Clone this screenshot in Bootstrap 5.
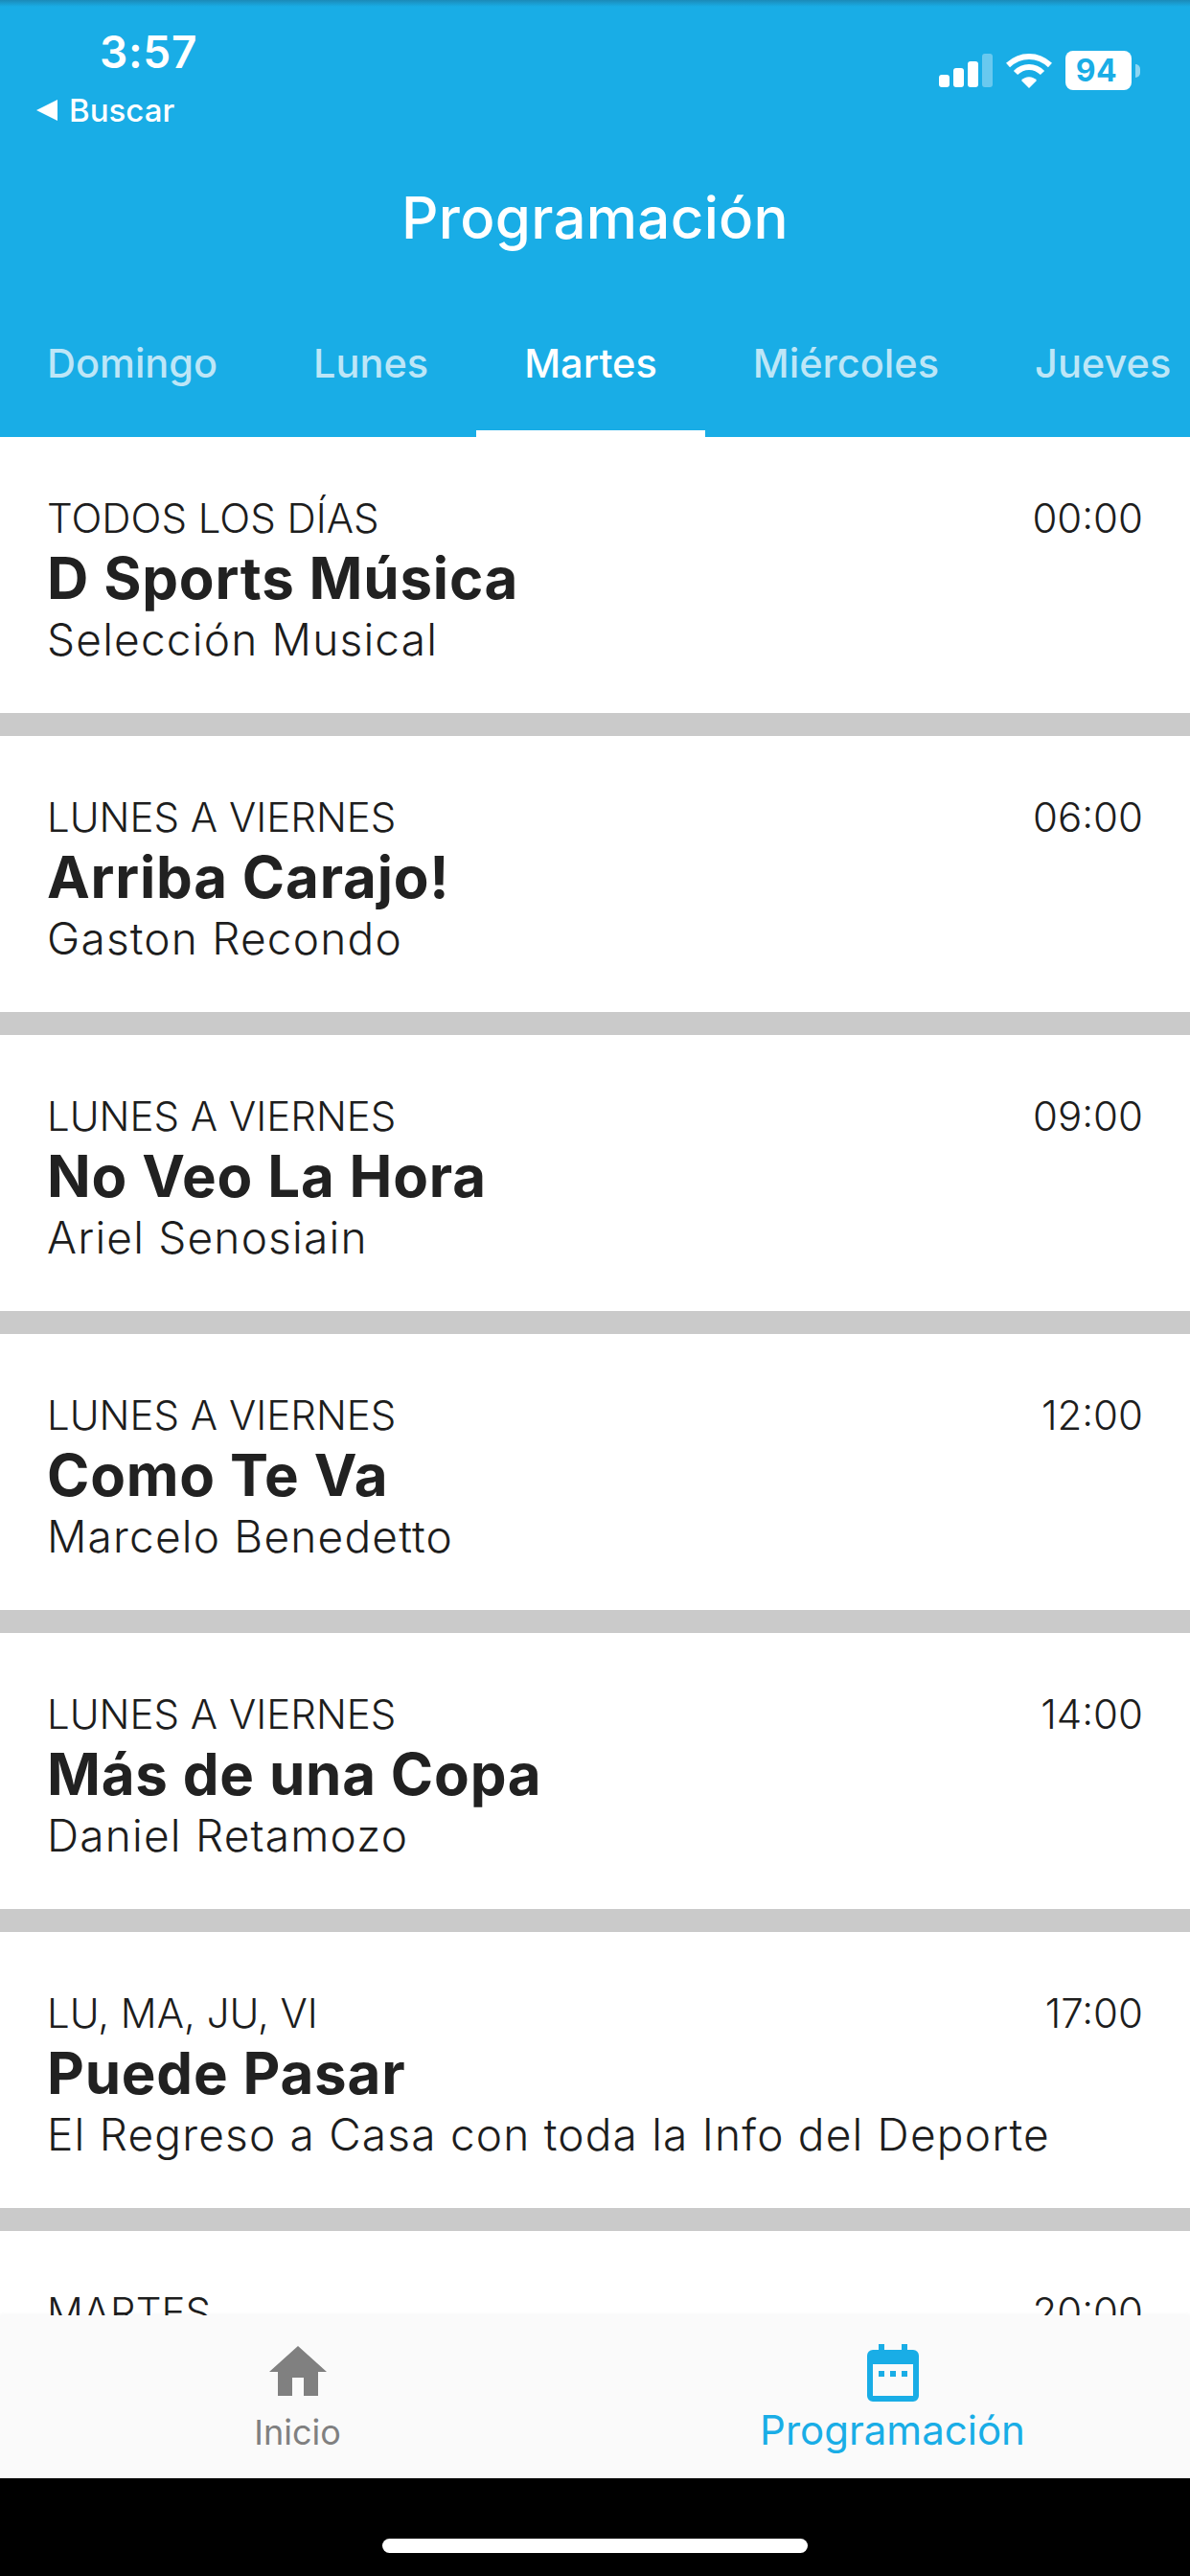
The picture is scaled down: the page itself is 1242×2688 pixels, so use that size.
<!DOCTYPE html>
<html lang="es">
<head>
<meta charset="utf-8">
<title>Programación</title>
<link href="https://cdn.jsdelivr.net/npm/bootstrap@5.3.0/dist/css/bootstrap.min.css" rel="stylesheet">
<style>
html,body{margin:0;height:2688px;overflow:hidden;background:#000}
body{font-family:Inter,"Liberation Sans",sans-serif;color:#212121}
.phone{width:1242px;height:2688px}
.hdr{background:#19ade6;height:456px;color:#fff;flex:none;background-image:linear-gradient(#1b8ab8 0,#19ade6 7px)}
.stat{height:144px;padding:0 52px 0 38px}
.clock{font-size:46px;font-weight:600;line-height:56px;padding:26px 0 0 66px;letter-spacing:.7px}
.back{font-size:33px;line-height:36px;font-weight:500;margin-top:15px;gap:12px}
.tri{width:0;height:0;border:11px solid transparent;border-right:22px solid #fff;border-left:0}
.sicons{padding-top:53px;gap:14px;height:94px}
.batt{width:69px;height:41px;background:#fff;border-radius:8px;color:#19ade6;font-size:32px;font-weight:700;line-height:41px;text-align:center;padding-right:4px;letter-spacing:.5px}
.nub{width:5px;height:14px;background:#fff;opacity:.5;border-radius:0 7px 7px 0;margin-left:-8px}
.ttl{font-size:60px;font-weight:500;line-height:68px;height:68px;margin-top:49px;letter-spacing:.3px}
.tabsrow{margin-top:70px;height:125px;overflow:hidden;flex-wrap:nowrap}
.tabsrow .nav-link{color:#bde6f7;font-size:41.5px;font-weight:500;line-height:50px;padding:23px 50px 0;height:125px;white-space:nowrap;border-bottom:7px solid transparent;border-radius:0}
.tabsrow .nav-link:first-child{padding-left:49px}
.tabsrow .nav-link.active{color:#fff;border-bottom-color:#fff}
.feed{flex:1 1 0;min-height:0;overflow:hidden;background:#cacaca}
.prog{background:#fff;height:288px;margin-bottom:24px;padding:60px 49px 0 49px}
.dlabel{font-size:42px;line-height:50px;font-weight:300;color:#1d1d1d}
.hour{font-size:42px;line-height:50px;font-weight:300;color:#1d1d1d}
.pname{font-size:60px;line-height:74px;font-weight:700;color:#212121;letter-spacing:.8px}
.psub{font-size:46px;line-height:54px;font-weight:300;color:#1d1d1d;letter-spacing:1.2px}
.tbar{height:170px;background:#fafafa;flex:none;box-shadow:0 -1px 4px rgba(0,0,0,.04)}
.tcol{flex:1 1 0;min-width:0}
.tlab{font-size:36px;line-height:42px;color:#808080;font-weight:400}
.tlab.on{font-size:42px;line-height:52px;color:#19ade6}
.homeic{margin-top:32px;display:block}
.calic{margin-top:30px;display:block}
.blackfoot{height:102px;background:#000;flex:none}
.pill{width:444px;height:15px;background:#fff;border-radius:8px;margin-top:63px}
</style>
</head>
<body>
<div class="phone d-flex flex-column">
  <header class="hdr">
    <div class="stat d-flex justify-content-between align-items-start">
      <div>
        <div class="clock">3:57</div>
        <div class="back d-flex align-items-center"><span class="tri"></span><span>Buscar</span></div>
      </div>
      <div class="sicons d-flex align-items-center">
        <svg width="56" height="36" viewBox="0 0 56 36"><rect x="0" y="22" width="11" height="13" rx="3" fill="#fff"/><rect x="15" y="15" width="11" height="20" rx="3" fill="#fff"/><rect x="30" y="8" width="11" height="27" rx="3" fill="#fff"/><rect x="45" y="0" width="11" height="35" rx="3" fill="#fff" opacity=".35"/></svg>
        <svg width="48" height="36" viewBox="0 0 48 36"><path d="M2 12C15 0 33 0 46 12" fill="none" stroke="#fff" stroke-width="6"/><path d="M10 20C18 12 30 12 38 20" fill="none" stroke="#fff" stroke-width="6"/><path d="M16 28C20 23 28 23 32 28L24 36Z" fill="#fff"/></svg>
        <div class="d-flex align-items-center">
          <div class="batt">94</div>
          <div class="nub ms-1"></div>
        </div>
      </div>
    </div>
    <div class="ttl text-center">Programación</div>
    <nav class="nav tabsrow">
      <a class="nav-link" href="#">Domingo</a>
      <a class="nav-link" href="#">Lunes</a>
      <a class="nav-link active" href="#">Martes</a>
      <a class="nav-link" href="#">Miércoles</a>
      <a class="nav-link" href="#">Jueves</a>
    </nav>
  </header>
  <main class="feed">
    <div class="prog"><div class="d-flex justify-content-between"><span class="dlabel">TODOS LOS DÍAS</span><span class="hour">00:00</span></div><div class="pname">D Sports Música</div><div class="psub">Selección Musical</div></div>
    <div class="prog"><div class="d-flex justify-content-between"><span class="dlabel">LUNES A VIERNES</span><span class="hour">06:00</span></div><div class="pname">Arriba Carajo!</div><div class="psub">Gaston Recondo</div></div>
    <div class="prog"><div class="d-flex justify-content-between"><span class="dlabel">LUNES A VIERNES</span><span class="hour">09:00</span></div><div class="pname">No Veo La Hora</div><div class="psub">Ariel Senosiain</div></div>
    <div class="prog"><div class="d-flex justify-content-between"><span class="dlabel">LUNES A VIERNES</span><span class="hour">12:00</span></div><div class="pname">Como Te Va</div><div class="psub">Marcelo Benedetto</div></div>
    <div class="prog"><div class="d-flex justify-content-between"><span class="dlabel">LUNES A VIERNES</span><span class="hour">14:00</span></div><div class="pname">Más de una Copa</div><div class="psub">Daniel Retamozo</div></div>
    <div class="prog"><div class="d-flex justify-content-between"><span class="dlabel">LU, MA, JU, VI</span><span class="hour">17:00</span></div><div class="pname">Puede Pasar</div><div class="psub">El Regreso a Casa con toda la Info del Deporte</div></div>
    <div class="prog"><div class="d-flex justify-content-between"><span class="dlabel">MARTES</span><span class="hour">20:00</span></div></div>
  </main>
  <nav class="tbar d-flex">
    <div class="tcol d-flex flex-column align-items-center">
      <svg class="homeic" width="60" height="53" viewBox="0 0 60 53"><path d="M30 0L60 27H51V52H36V33H24V52H9V27H0Z" fill="#808080"/></svg>
      <div class="tlab mt-3">Inicio</div>
    </div>
    <div class="tcol d-flex flex-column align-items-center">
      <svg class="calic" width="54" height="60" viewBox="0 0 54 60"><path d="M12 0h6v6h18V0h6v6h6a6 6 0 0 1 6 6v42a6 6 0 0 1-6 6H6a6 6 0 0 1-6-6V12a6 6 0 0 1 6-6h6Z" fill="#19ade6"/><rect x="6" y="21" width="42" height="33" fill="#fafafa"/><rect x="12" y="28" width="6" height="6" fill="#19ade6"/><rect x="24" y="28" width="6" height="6" fill="#19ade6"/><rect x="36" y="28" width="6" height="6" fill="#19ade6"/></svg>
      <div class="tlab on mt-1">Programación</div>
    </div>
  </nav>
  <div class="blackfoot d-flex justify-content-center"><div class="pill"></div></div>
</div>
<script src="https://cdn.jsdelivr.net/npm/bootstrap@5.3.0/dist/js/bootstrap.bundle.min.js"></script>
</body>
</html>
